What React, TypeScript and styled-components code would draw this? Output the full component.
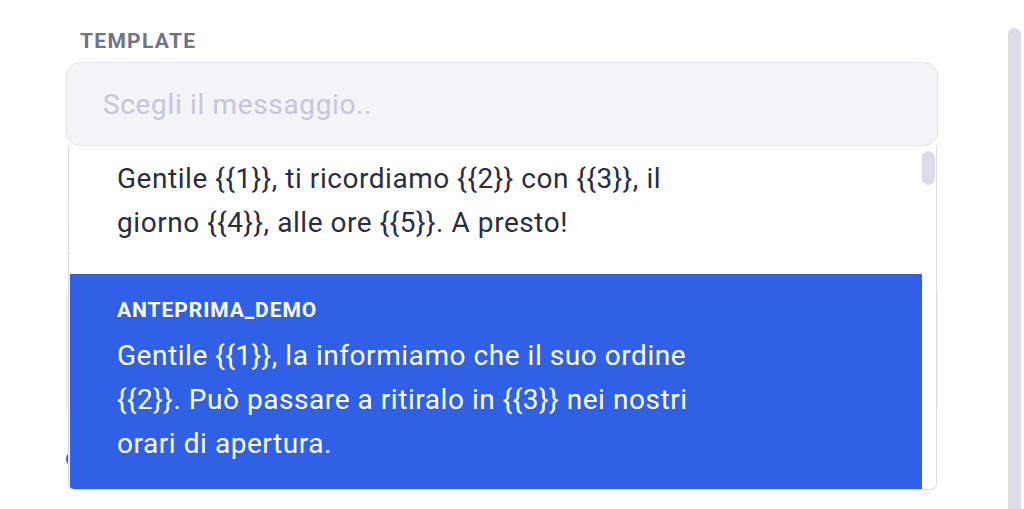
import { useLayoutEffect, useRef } from 'react';
import styled, { createGlobalStyle } from 'styled-components';

const GlobalStyle = createGlobalStyle`
  html, body {
    margin: 0;
    padding: 0;
    background: #ffffff;
  }
  body {
    font-family: Roboto, 'Liberation Sans', sans-serif;
  }
`;

const templates = [
  {
    name: 'PROMEMORIA_APPUNTAMENTO',
    body: 'Gentile {{1}}, ti ricordiamo {{2}} con {{3}}, il giorno {{4}}, alle ore {{5}}. A presto!',
  },
  {
    name: 'ANTEPRIMA_DEMO',
    body: 'Gentile {{1}}, la informiamo che il suo ordine {{2}}. Può passare a ritiralo in {{3}} nei nostri orari di apertura.',
  },
  {
    name: 'CONFERMA_ORDINE',
    body: 'Ciao {{1}}, il tuo ordine {{2}} è stato confermato e sarà spedito entro {{3}}.',
  },
  {
    name: 'BENVENUTO',
    body: 'Benvenuto {{1}}! Grazie per esserti iscritto a {{2}}. Per qualsiasi domanda rispondi a questo messaggio.',
  },
  {
    name: 'PAGAMENTO_RICEVUTO',
    body: 'Gentile {{1}}, abbiamo ricevuto il pagamento di {{2}} per la fattura {{3}}. Grazie!',
  },
  {
    name: 'SPEDIZIONE_IN_CORSO',
    body: 'Ciao {{1}}, il tuo pacco {{2}} è in consegna. Lo riceverai il giorno {{3}}.',
  },
];

const Page = styled.div`
  display: flex;
  width: 1024px;
  height: 509px;
  overflow: hidden;
  background: #ffffff;
`;

const Main = styled.div`
  flex: 1;
  padding: 28px 0 0 66px;
`;

const Form = styled.div`
  position: relative;
  width: 872px;
  display: flex;
  flex-direction: column;
`;

const Label = styled.label`
  padding-left: 14px;
  font-size: 21px;
  font-weight: 700;
  line-height: 26px;
  letter-spacing: 1.3px;
  color: #707389;
  margin-bottom: 8px;
`;

const SelectBox = styled.div`
  height: 84px;
  box-sizing: border-box;
  display: flex;
  align-items: center;
  padding-left: 36px;
  border: 1px solid #e4e4ec;
  border-radius: 14px;
  background: #f3f3f8;
  font-size: 28px;
  letter-spacing: 0.65px;
  color: #c5c6d8;
`;

const PreviewLink = styled.div`
  margin-top: 58px;
  font-size: 25px;
  line-height: 24px;
  color: #3060e6;
`;

const Divider = styled.div`
  margin-top: 25px;
  height: 1px;
  background: #e3e3ea;
`;

const TextArea = styled.div`
  margin-top: 28px;
  height: 138px;
  border-radius: 14px;
  background: #f1f0ef;
`;

const Switch = styled.div`
  margin-top: 30px;
  width: 36px;
  height: 18px;
  border-radius: 9px;
  background: #3060e6;
`;

const Dropdown = styled.div`
  position: absolute;
  top: 118px;
  left: 2px;
  right: 1px;
  height: 344px;
  box-sizing: border-box;
  display: flex;
  border: 1px solid #dcdce2;
  border-top: none;
  border-radius: 0 0 6px 6px;
  background: #ffffff;
  z-index: 2;
  overflow: hidden;
`;

const List = styled.div`
  flex: 1;
  height: 100%;
  overflow: hidden;
  padding-left: 1px;
`;

const ScrollTrack = styled.div`
  width: 14px;
  padding-top: 5px;
`;

const ScrollThumb = styled.div`
  width: 13px;
  height: 34px;
  border-radius: 7px;
  background: #dcdce8;
`;

const Option = styled.div<{ $active?: boolean }>`
  padding: 22px 47px 29px;
  background: ${(p) => (p.$active ? '#3060e6' : 'transparent')};
  color: ${(p) => (p.$active ? '#ffffff' : '#2a2d40')};
`;

const OptionName = styled.div`
  font-size: 21px;
  font-weight: 700;
  line-height: 28px;
  letter-spacing: 0.95px;
  margin-bottom: 10px;
`;

const OptionBody = styled.div`
  max-width: 600px;
  font-size: 28px;
  line-height: 44px;
  letter-spacing: 0.55px;
`;

const Rail = styled.div`
  width: 16px;
  padding-top: 28px;
  display: flex;
`;

const RailThumb = styled.div`
  width: 13px;
  border-radius: 7px 7px 0 0;
  background: #dcdbe9;
`;

const App = () => {
  const listRef = useRef<HTMLDivElement>(null);

  useLayoutEffect(() => {
    if (listRef.current) listRef.current.scrollTop = 49;
  }, []);

  return (
    <Page>
      <GlobalStyle />
      <Main>
        <Form>
          <Label>{'TEMPLATE'}</Label>
          <SelectBox>{'Scegli il messaggio..'}</SelectBox>
          <PreviewLink>{'Inserisci variabili'}</PreviewLink>
          <Divider />
          <TextArea />
          <Switch />

          <Dropdown>
            <List ref={listRef}>
              {templates.map((t, i) => (
                <Option key={t.name} $active={i === 1}>
                  <OptionName>{t.name}</OptionName>
                  <OptionBody>{t.body}</OptionBody>
                </Option>
              ))}
            </List>
            <ScrollTrack>
              <ScrollThumb />
            </ScrollTrack>
          </Dropdown>
        </Form>
      </Main>
      <Rail>
        <RailThumb />
      </Rail>
    </Page>
  );
};

export default App;
